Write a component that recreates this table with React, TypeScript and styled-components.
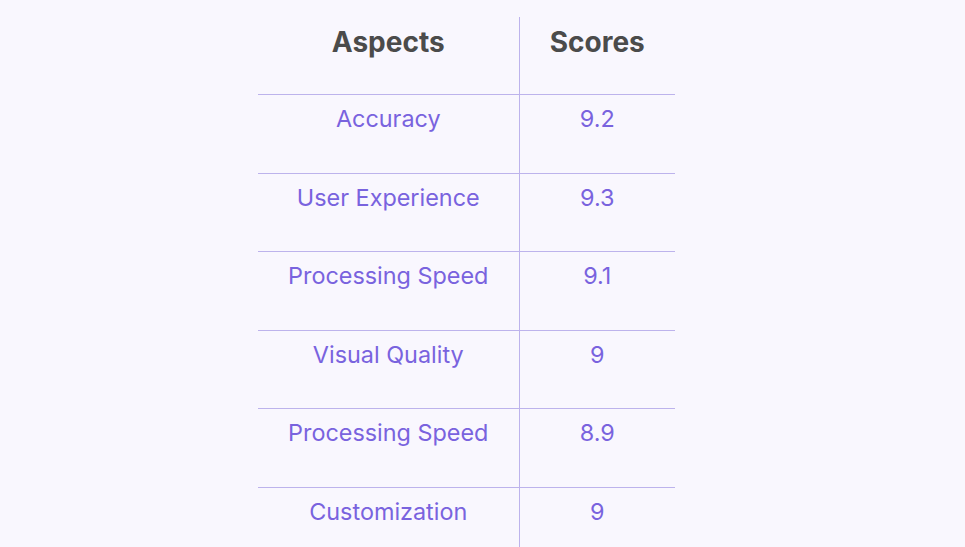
import * as React from 'react'
import styled, { createGlobalStyle } from 'styled-components'

const GlobalStyle = createGlobalStyle`
  html, body {
    margin: 0;
    padding: 0;
    background: #f9f7fe;
  }
  body {
    font-family: Inter, "Noto Sans", sans-serif;
  }
`

const rows = [
  { aspect: 'Accuracy', score: '9.2' },
  { aspect: 'User Experience', score: '9.3' },
  { aspect: 'Processing Speed', score: '9.1' },
  { aspect: 'Visual Quality', score: '9' },
  { aspect: 'Processing Speed', score: '8.9' },
  { aspect: 'Customization', score: '9' },
]

const App = () => {
  return (
    <>
      <GlobalStyle />
      <Page>
        <Table>
          <colgroup>
            <col style={{ width: 261 }} />
            <col style={{ width: 156 }} />
          </colgroup>
          <thead>
            <tr>
              <HeadCell>Aspects</HeadCell>
              <HeadCell>Scores</HeadCell>
            </tr>
          </thead>
          <tbody>
            {rows.map((r, i) => (
              <Row key={i} $tall={i % 2 === 0}>
                <Cell>{r.aspect}</Cell>
                <Cell>{r.score}</Cell>
              </Row>
            ))}
          </tbody>
        </Table>
      </Page>
    </>
  )
}

export default App

const Page = styled.div`
  height: 547px;
  overflow: hidden;
  padding: 17px 0 0 258px;
  box-sizing: border-box;
`

const Table = styled.table`
  border-collapse: collapse;
  table-layout: fixed;
  width: 417px;
`

const HeadCell = styled.th`
  height: 77px;
  padding: 8px 8px 0;
  box-sizing: border-box;
  vertical-align: top;
  text-align: center;
  font-size: 28px;
  font-weight: 700;
  line-height: 34px;
  color: #4b4b4b;
  border-bottom: 1px solid #bdb3ec;
  & + & {
    border-left: 1px solid #bdb3ec;
  }
`

const Row = styled.tr<{ $tall: boolean }>`
  height: ${p => (p.$tall ? 79 : 78)}px;
`

const Cell = styled.td`
  padding: 10px 8px 0;
  box-sizing: border-box;
  vertical-align: top;
  text-align: center;
  font-size: 23.4px;
  font-weight: 400;
  line-height: 28px;
  color: #7963de;
  border-bottom: 1px solid #bdb3ec;
  & + & {
    border-left: 1px solid #bdb3ec;
  }
`
